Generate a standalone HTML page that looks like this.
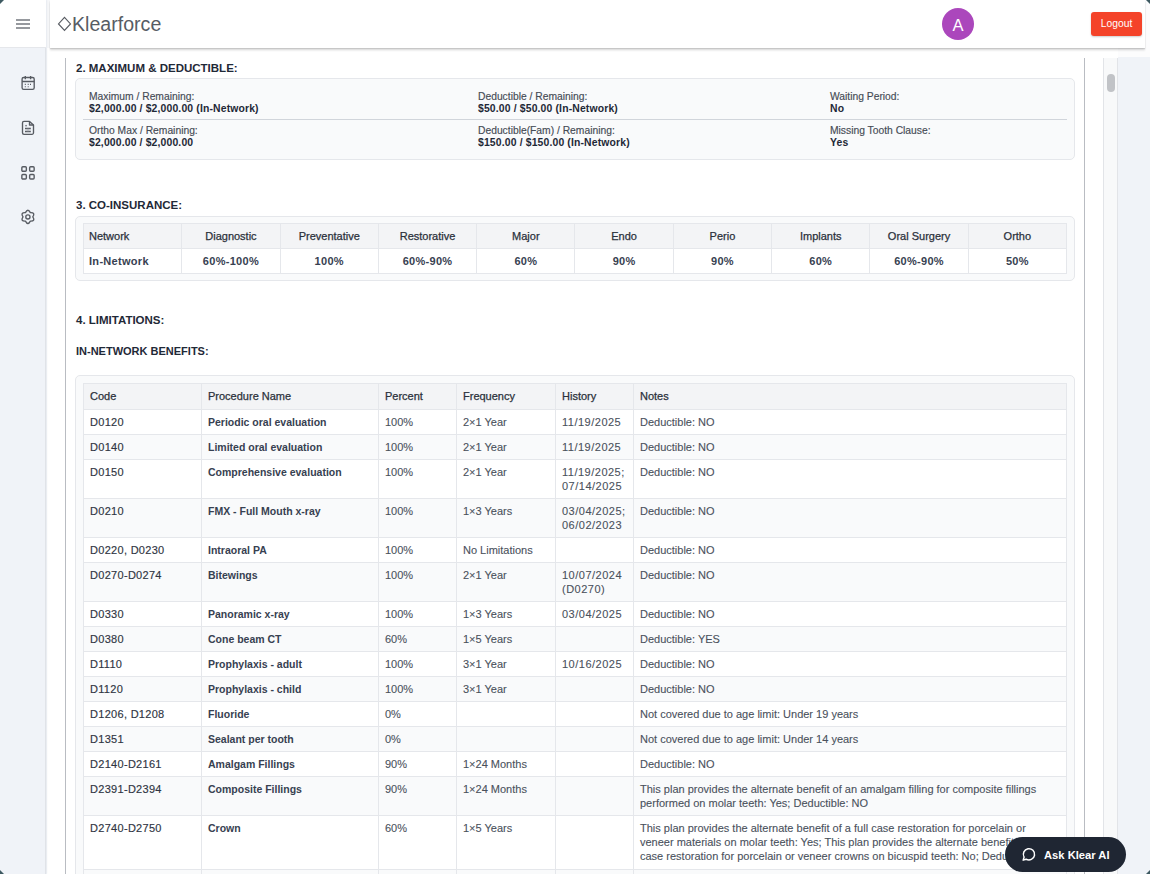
<!DOCTYPE html>
<html><head><meta charset="utf-8">
<style>
*{box-sizing:border-box;margin:0;padding:0}
html,body{width:1150px;height:874px;overflow:hidden}
body{position:relative;background:#f0f3f8;font-family:"Liberation Sans",sans-serif;color:#374151}
.abs{position:absolute}
#side{z-index:3;left:0;top:0;width:46px;height:874px;background:#f0f3f8;border-right:1px solid #e0e3e8;box-shadow:1px 0 2px rgba(0,0,0,.04)}
#sidetop{z-index:4;left:0;top:0;width:46px;height:48px;background:#fff;border-bottom:1px solid #e5e7eb}
#hdr{z-index:2;left:50px;top:0;width:1095px;height:48px;background:#fff;box-shadow:0 1px 1px rgba(0,0,0,.10),0 2px 2px rgba(0,0,0,.10),0 3px 2px rgba(0,0,0,.04)}
#main{left:47px;top:48px;width:1071px;height:826px;background:#fff}
#topw{left:50px;top:0;width:1100px;height:57px;background:#fcfcfd}
#vl1{left:65px;top:58px;width:1px;height:816px;background:#b9bcc2}
#vl2{left:1084px;top:58px;width:1px;height:816px;background:#b9bcc2}
#track{left:1103px;top:58px;width:15px;height:816px;background:#f8f9fa;border-left:1px solid #e2e4e8;border-right:1px solid #e2e4e8}
#thumb{left:1107px;top:74px;width:8px;height:18px;background:#c1c3c7;border-radius:4px}
.title{position:absolute;left:76px;font-weight:700;font-size:11.5px;color:#1f2937;line-height:14px;white-space:nowrap}
.box{position:absolute;left:75px;width:1000px;background:#f9fafb;border:1px solid #e5e7eb;border-radius:5px}
.lab{position:absolute;font-size:10.3px;color:#454b55;-webkit-text-stroke:.15px #454b55;line-height:13px;white-space:nowrap}
.val{position:absolute;font-size:10.4px;font-weight:700;color:#1f2937;letter-spacing:.15px;line-height:13px;white-space:nowrap}
table{border-collapse:collapse;table-layout:fixed;position:absolute}
td,th{border:1px solid #e5e7eb;font-size:11px;line-height:14px;vertical-align:top;white-space:nowrap;overflow:hidden}
#co{left:83px;top:223px;width:984px}
#co th{background:#f3f4f6;font-weight:400;color:#2b313b;-webkit-text-stroke:.25px #2b313b;height:25px;padding:0 6px;vertical-align:middle;text-align:center;font-size:11px}
#co td{background:#fff;font-weight:700;color:#374151;letter-spacing:.3px;height:25px;padding:0 6px;vertical-align:middle;text-align:center;font-size:11px}
#co th:first-child,#co td:first-child{text-align:left;padding-left:5px}
#lim{left:83px;top:383px;width:983px}
#lim th{background:#f3f4f6;font-weight:400;text-align:left;color:#2b313b;height:26px;padding:0 6px 2px;-webkit-text-stroke:.25px #2b313b;vertical-align:middle}
#lim td{padding:5px 6px 5px 6px;color:#4a515c;-webkit-text-stroke:.1px #4a515c}
#lim td.c{color:#2f3542;-webkit-text-stroke:.15px #2f3542;letter-spacing:.3px}
#lim td:nth-child(5){letter-spacing:.5px}
#lim tr.r3 td{padding-bottom:6px}
#lim td.p{font-weight:700;font-size:10.5px;color:#374151;-webkit-text-stroke:0}
#lim tr:nth-child(odd) td{background:#f9fafb}
#lim tr:nth-child(even) td{background:#fff}
#ask{left:1005px;top:837px;width:121px;height:35px;border-radius:18px;background:#1f2633;color:#fff;font-weight:700;font-size:11.2px;line-height:37px;padding-left:39px;white-space:nowrap}
.corner{position:absolute;z-index:9;width:4px;height:4px;background:#3e5a62}
</style></head><body>
<div id="side" class="abs"></div>
<div id="sidetop" class="abs">
  <svg class="abs" style="left:15px;top:18px" width="16" height="12" viewBox="0 0 16 12"><path d="M1 2h14M1 6h14M1 10h14" stroke="#74787f" stroke-width="1.35"/></svg>
</div>
<!-- sidebar icons -->
<svg class="abs" style="z-index:5;left:18px;top:72px" width="20" height="24" viewBox="0 0 20 24" fill="none" stroke="#575b62" stroke-width="1.35"><rect x="4.1" y="5.5" width="12.1" height="11.9" rx="1.6"/><path d="M7.3 3.9V7.3M12.6 3.9V7.3M4.1 9.5H16.2"/><path d="M6.8 12.4h1M9.7 12.4h1M12 12.4h1M6.8 14.8h1M9.7 14.8h1" stroke-width="1.1"/></svg>
<svg class="abs" style="z-index:5;left:18px;top:116px" width="20" height="24" viewBox="0 0 20 24" fill="none" stroke="#575b62" stroke-width="1.35" stroke-linejoin="round"><path d="M6 5.4H11.5L15.5 9V16.8A1.5 1.5 0 0 1 14 18.3H6A1.5 1.5 0 0 1 4.5 16.8V6.9A1.5 1.5 0 0 1 6 5.4Z"/><path d="M11.5 5.4V9H15.5"/><path d="M7.6 9.3l.9.9M7 12.5H12.8M7 15.5H12.8"/><rect x="8.6" y="12.8" width="2.6" height="2.4" fill="#b8bbc1" stroke="none"/></svg>
<svg class="abs" style="z-index:5;left:18px;top:161px" width="20" height="24" viewBox="0 0 20 24" fill="none" stroke="#575b62" stroke-width="1.4"><rect x="3.85" y="5.75" width="4.5" height="4.5" rx="1"/><rect x="11.65" y="5.75" width="4.5" height="4.5" rx="1"/><rect x="3.85" y="13.55" width="4.5" height="4.5" rx="1"/><rect x="11.65" y="13.55" width="4.5" height="4.5" rx="1"/></svg>
<svg class="abs" style="z-index:5;left:18px;top:205px" width="20" height="24" viewBox="0 0 20 24" fill="none" stroke="#575b62" stroke-width="1.35" stroke-linejoin="round"><path d="M7.45 7.66Q9.90 2.90 12.35 7.66Q17.69 7.40 14.80 11.90Q17.69 16.40 12.35 16.14Q9.90 20.90 7.45 16.14Q2.11 16.40 5.00 11.90Q2.11 7.40 7.45 7.66Z"/><circle cx="9.9" cy="11.9" r="2.1"/></svg>

<div id="topw" class="abs"></div>
<div class="abs" style="left:47px;top:0;width:3px;height:48px;background:#f6f7f9"></div>
<div id="hdr" class="abs">
  <svg class="abs" style="left:7px;top:16px" width="15" height="16" viewBox="0 0 15 16"><path d="M7.5 1.3L13.5 7.9 7.5 14.5 1.5 7.9z" fill="none" stroke="#575b62" stroke-width="1.15"/></svg><div class="abs" style="left:22px;top:12.5px;font-size:19.6px;line-height:22px;color:#575c64;white-space:nowrap">Klearforce</div>
  <div class="abs" style="left:892px;top:8px;width:32px;height:32px;border-radius:50%;background:#ab47bc;color:#fff;font-size:16.5px;line-height:34px;text-align:center">A</div>
  <div class="abs" style="left:1041px;top:12px;width:51px;height:24px;border-radius:3px;background:#f44329;color:#fff;font-size:10.3px;line-height:24px;text-align:center;box-shadow:0 1px 2px rgba(0,0,0,.2)">Logout</div>
</div>

<div id="main" class="abs"></div>
<div id="vl1" class="abs"></div>
<div id="vl2" class="abs"></div>
<div id="track" class="abs"></div>
<div id="thumb" class="abs"></div>

<div class="title" style="top:61px">2. MAXIMUM &amp; DEDUCTIBLE:</div>
<div class="box" style="top:78px;height:82px"></div>
<div class="abs" style="left:83px;top:119px;width:984px;height:1px;background:#d1d5db"></div>
<div class="lab" style="left:89px;top:90px">Maximum / Remaining:</div>
<div class="val" style="left:89px;top:102px">$2,000.00 / $2,000.00 (In-Network)</div>
<div class="lab" style="left:478px;top:90px">Deductible / Remaining:</div>
<div class="val" style="left:478px;top:102px">$50.00 / $50.00 (In-Network)</div>
<div class="lab" style="left:830px;top:90px">Waiting Period:</div>
<div class="val" style="left:830px;top:102px">No</div>
<div class="lab" style="left:89px;top:124px">Ortho Max / Remaining:</div>
<div class="val" style="left:89px;top:136px">$2,000.00 / $2,000.00</div>
<div class="lab" style="left:478px;top:124px">Deductible(Fam) / Remaining:</div>
<div class="val" style="left:478px;top:136px">$150.00 / $150.00 (In-Network)</div>
<div class="lab" style="left:830px;top:124px">Missing Tooth Clause:</div>
<div class="val" style="left:830px;top:136px">Yes</div>

<div class="title" style="top:198px">3. CO-INSURANCE:</div>
<div class="box" style="top:216px;height:65px"></div>
<table id="co">
<colgroup><col><col><col><col><col><col><col><col><col><col></colgroup>
<tr><th>Network</th><th>Diagnostic</th><th>Preventative</th><th>Restorative</th><th>Major</th><th>Endo</th><th>Perio</th><th>Implants</th><th>Oral Surgery</th><th>Ortho</th></tr>
<tr><td>In-Network</td><td>60%-100%</td><td>100%</td><td>60%-90%</td><td>60%</td><td>90%</td><td>90%</td><td>60%</td><td>60%-90%</td><td>50%</td></tr>
</table>

<div class="title" style="top:313px">4. LIMITATIONS:</div>
<div class="title" style="top:344px;font-size:11px">IN-NETWORK BENEFITS:</div>
<div class="box" style="top:375px;height:520px"></div>
<table id="lim">
<colgroup><col style="width:118px"><col style="width:177px"><col style="width:78px"><col style="width:99px"><col style="width:78px"><col style="width:433px"></colgroup>
<tr><th>Code</th><th>Procedure Name</th><th>Percent</th><th>Frequency</th><th>History</th><th>Notes</th></tr>
<tr><td class="c">D0120</td><td class="p">Periodic oral evaluation</td><td>100%</td><td>2×1 Year</td><td>11/19/2025</td><td>Deductible: NO</td></tr>
<tr><td class="c">D0140</td><td class="p">Limited oral evaluation</td><td>100%</td><td>2×1 Year</td><td>11/19/2025</td><td>Deductible: NO</td></tr>
<tr><td class="c">D0150</td><td class="p">Comprehensive evaluation</td><td>100%</td><td>2×1 Year</td><td>11/19/2025;<br>07/14/2025</td><td>Deductible: NO</td></tr>
<tr><td class="c">D0210</td><td class="p">FMX - Full Mouth x-ray</td><td>100%</td><td>1×3 Years</td><td>03/04/2025;<br>06/02/2023</td><td>Deductible: NO</td></tr>
<tr><td class="c">D0220, D0230</td><td class="p">Intraoral PA</td><td>100%</td><td>No Limitations</td><td></td><td>Deductible: NO</td></tr>
<tr><td class="c">D0270-D0274</td><td class="p">Bitewings</td><td>100%</td><td>2×1 Year</td><td>10/07/2024<br>(D0270)</td><td>Deductible: NO</td></tr>
<tr><td class="c">D0330</td><td class="p">Panoramic x-ray</td><td>100%</td><td>1×3 Years</td><td>03/04/2025</td><td>Deductible: NO</td></tr>
<tr><td class="c">D0380</td><td class="p">Cone beam CT</td><td>60%</td><td>1×5 Years</td><td></td><td>Deductible: YES</td></tr>
<tr><td class="c">D1110</td><td class="p">Prophylaxis - adult</td><td>100%</td><td>3×1 Year</td><td>10/16/2025</td><td>Deductible: NO</td></tr>
<tr><td class="c">D1120</td><td class="p">Prophylaxis - child</td><td>100%</td><td>3×1 Year</td><td></td><td>Deductible: NO</td></tr>
<tr><td class="c">D1206, D1208</td><td class="p">Fluoride</td><td>0%</td><td></td><td></td><td>Not covered due to age limit: Under 19 years</td></tr>
<tr><td class="c">D1351</td><td class="p">Sealant per tooth</td><td>0%</td><td></td><td></td><td>Not covered due to age limit: Under 14 years</td></tr>
<tr><td class="c">D2140-D2161</td><td class="p">Amalgam Fillings</td><td>90%</td><td>1×24 Months</td><td></td><td>Deductible: NO</td></tr>
<tr><td class="c">D2391-D2394</td><td class="p">Composite Fillings</td><td>90%</td><td>1×24 Months</td><td></td><td>This plan provides the alternate benefit of an amalgam filling for composite fillings<br>performed on molar teeth: Yes; Deductible: NO</td></tr>
<tr class="r3"><td class="c">D2740-D2750</td><td class="p">Crown</td><td>60%</td><td>1×5 Years</td><td></td><td>This plan provides the alternate benefit of a full case restoration for porcelain or<br>veneer materials on molar teeth: Yes; This plan provides the alternate benefit of a full<br>case restoration for porcelain or veneer crowns on bicuspid teeth: No; Deductible: NO</td></tr>
<tr><td class="c">D2750</td><td class="p">Crown</td><td>60%</td><td>1×5 Years</td><td></td><td>Deductible: NO</td></tr>
</table>

<div id="ask" class="abs">
  <svg class="abs" style="left:16px;top:10px" width="15" height="15" viewBox="0 0 16 16" fill="none" stroke="#fff" stroke-width="1.6" stroke-linejoin="round"><path d="M2.3 14l1-3.2A6 6 0 1 1 5.5 13z"/></svg>
  Ask Klear AI
</div>

<div class="corner" style="left:0;top:0;clip-path:polygon(0 0,100% 0,0 100%)"></div>
<div class="corner" style="right:0;top:0;clip-path:polygon(0 0,100% 0,100% 100%)"></div>
<div class="corner" style="left:0;bottom:0;clip-path:polygon(0 0,100% 100%,0 100%)"></div>
<div class="corner" style="right:0;bottom:0;clip-path:polygon(100% 0,100% 100%,0 100%)"></div>
</body></html>
